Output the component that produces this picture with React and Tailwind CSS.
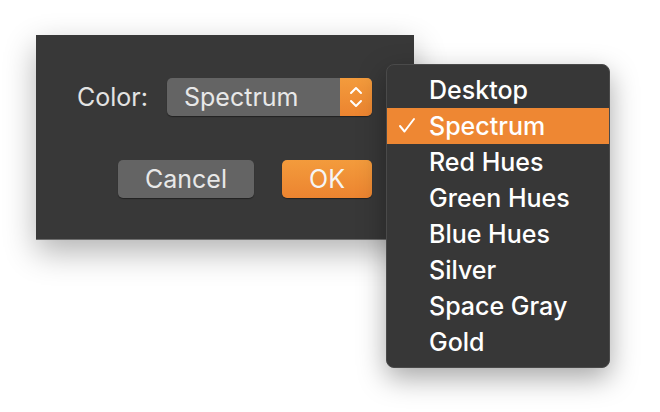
import React from 'react';

const items = ['Desktop', 'Spectrum', 'Red Hues', 'Green Hues', 'Blue Hues', 'Silver', 'Space Gray', 'Gold'];

function Stepper() {
  return (
    <svg width="16" height="26" viewBox="0 0 16 26" fill="none" stroke="white" strokeWidth="2" strokeLinecap="round" strokeLinejoin="round">
      <path d="M3 9 L8 4 L13 9" />
      <path d="M3 17 L8 22 L13 17" />
    </svg>
  );
}

function Check() {
  return (
    <svg width="18" height="17" viewBox="0 0 18 17" fill="none" stroke="white" strokeWidth="2" strokeLinecap="round" strokeLinejoin="round">
      <path d="M2 9 L6.5 14.5 L16 2" />
    </svg>
  );
}

export default function App() {
  return (
    <div className="relative w-[660px] h-[412px] bg-white overflow-hidden" style={{ fontFamily: 'Inter, "Liberation Sans", sans-serif' }}>
      {/* Dialog */}
      <div className="ml-[36px] mt-[35px] w-[378px] h-[205px] bg-[#383838] border-b border-[#6d6d6d] shadow-[0_12px_30px_rgba(0,0,0,0.3)] pt-[43px] pl-[41px] pr-[42px]">
        <div className="flex items-center">
          <span className="text-[25px] text-[#e3e3e3] leading-none">Color:</span>
          <div className="ml-auto flex w-[205px] h-[38px] rounded-[5px] overflow-hidden bg-[#646464] shadow-[0_1px_1px_rgba(0,0,0,0.4)]">
            <div className="flex-1 flex items-center pl-[17px] text-[25px] text-[#e8e8e8] leading-none">Spectrum</div>
            <div className="w-[32px] flex items-center justify-center bg-gradient-to-b from-[#f39b3c] to-[#ec8430]">
              <Stepper />
            </div>
          </div>
        </div>
        <div className="flex justify-end gap-[28px] mt-[44px]">
          <button className="w-[136px] h-[38px] rounded-[5px] bg-[#646464] text-[25px] text-[#e8e8e8] leading-none shadow-[0_1px_1px_rgba(0,0,0,0.4)]">Cancel</button>
          <button className="w-[90px] h-[38px] rounded-[5px] bg-gradient-to-b from-[#f39b3c] to-[#ec8430] text-[25px] text-[#f5f5f5] leading-none shadow-[0_1px_1px_rgba(0,0,0,0.4)]">OK</button>
        </div>
      </div>

      {/* Popup menu */}
      <div className="absolute left-[386px] top-[64px] w-[224px] py-[7px] rounded-[8px] bg-[#373737] border border-[#4a4a4a] shadow-[0_10px_28px_rgba(0,0,0,0.35)]">
        {items.map((item) => (
          <div key={item} className={`relative flex items-center h-[36px] pl-[42px] text-[25px] font-medium text-white leading-none ${item === 'Spectrum' ? 'bg-[#ee8733]' : ''}`}>
            {item === 'Spectrum' && (
              <span className="absolute left-[11px] top-[9px]"><Check /></span>
            )}
            {item}
          </div>
        ))}
      </div>
    </div>
  );
}
